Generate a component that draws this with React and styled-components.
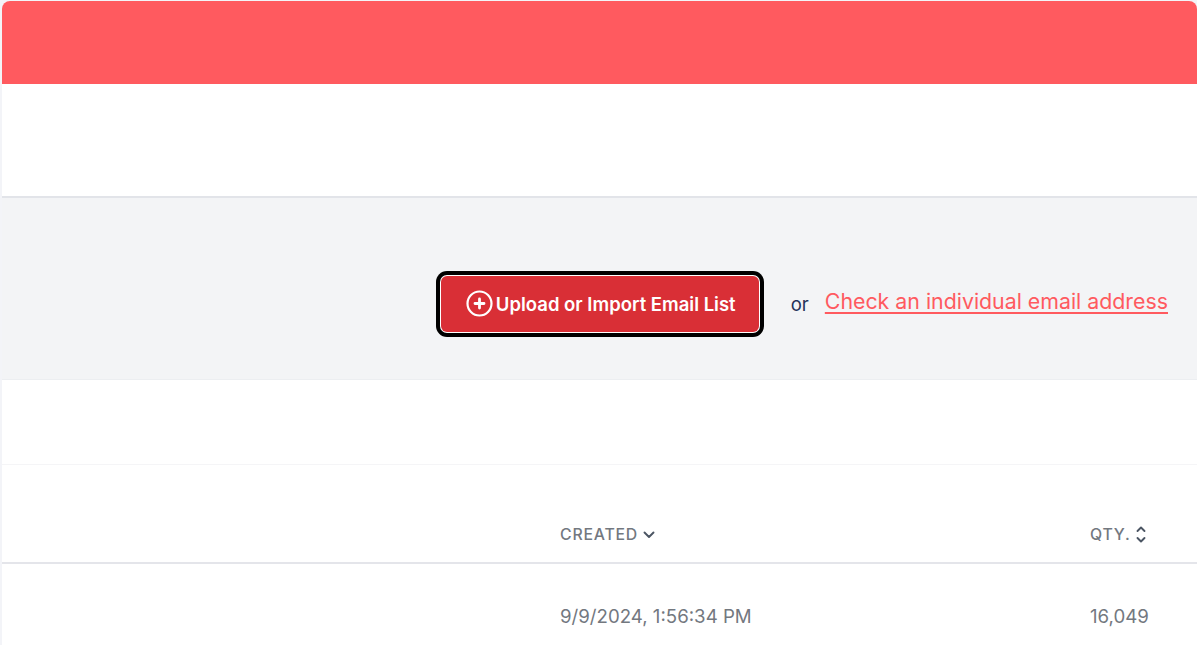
import React from 'react'
import styled, { createGlobalStyle } from 'styled-components'

const GlobalStyle = createGlobalStyle`
  html, body {
    margin: 0;
    padding: 0;
    background: #f3f4f8;
    font-family: Inter, "Liberation Sans", sans-serif;
    overflow: hidden;
  }
`

const Page = styled.div`
  height: 645px;
  padding: 1px 0 0 2px;
  box-sizing: border-box;
  overflow: hidden;
`

const Card = styled.div`
  background: #fff;
  border-radius: 8px 8px 0 0;
  overflow: hidden;
  height: 644px;
`

const Banner = styled.div`
  height: 83px;
  background: #ff5a5f;
`

const Spacer = styled.div`
  height: ${p => p.$height}px;
  border-bottom: ${p => p.$border || 'none'};
`

const ActionBar = styled.div`
  height: 182px;
  box-sizing: border-box;
  background: #f3f4f6;
  border-bottom: 1px solid #eceef1;
  display: flex;
  align-items: center;
  justify-content: flex-end;
  padding: 30px 29px 0 0;
`

const UploadButton = styled.button`
  width: 318px;
  height: 56px;
  margin-right: 32px;
  border: none;
  border-radius: 6px;
  background: #d92f36;
  box-shadow: 0 0 0 1px #fff, 0 0 0 5px #000;
  color: #fff;
  font: 600 18.5px Inter, sans-serif;
  display: flex;
  align-items: center;
  justify-content: center;
  gap: 3px;
  padding: 0 0 0 2px;
`

const Or = styled.span`
  font-size: 18.5px;
  color: #24325a;
  margin-right: 16px;
`

const CheckLink = styled.a`
  font-size: 21.33px;
  color: #ff5a5f;
  text-decoration: underline;
  text-underline-offset: 3px;
  margin-bottom: 6px;
`

const TableRow = styled.div`
  display: grid;
  grid-template-columns: 558px 530px 1fr;
  align-items: center;
  height: ${p => p.$height}px;
  padding-top: ${p => p.$top || 0}px;
  box-sizing: border-box;
  border-bottom: ${p => p.$border || 'none'};
`

const HeadCell = styled.div`
  display: flex;
  align-items: center;
  gap: 5px;
  font-size: 15.8px;
  font-weight: 500;
  letter-spacing: 0.8px;
  color: #73787f;
`

const Cell = styled.div`
  font-size: 18.67px;
  color: #73787f;
`

const PlusCircle = () => (
  <svg width="27" height="27" viewBox="0 0 27 27" fill="none" stroke="#fff" strokeLinecap="round">
    <circle cx="13.5" cy="13.5" r="12" strokeWidth="2.2" />
    <path d="M13.5 9v9M9 13.5h9" strokeWidth="2.8" />
  </svg>
)

const ChevronDown = () => (
  <svg width="12" height="8" viewBox="0 0 12 8" fill="none" stroke="#4b5563" strokeWidth="1.9" strokeLinecap="round" strokeLinejoin="round">
    <path d="M1.5 1.5 6 6l4.5-4.5" />
  </svg>
)

const ChevronUpDown = () => (
  <svg width="10" height="17" viewBox="0 0 10 17" fill="none" stroke="#4b5563" strokeWidth="1.9" strokeLinecap="round" strokeLinejoin="round">
    <path d="M1.5 5 5 1.5 8.5 5M1.5 12 5 15.5 8.5 12" />
  </svg>
)

export default function App() {
  return (
    <>
      <GlobalStyle />
      <Page>
        <Card>
          <Banner />
          <Spacer $height={112} $border="2px solid #e2e4e9" />
          <ActionBar>
            <UploadButton>
              <PlusCircle />
              Upload or Import Email List
            </UploadButton>
            <Or>or</Or>
            <CheckLink href="#">Check an individual email address</CheckLink>
          </ActionBar>
          <Spacer $height={84} $border="1px solid #f5f5f7" />
          <TableRow $height={99} $top={42} $border="2px solid #e4e5ea">
            <div />
            <HeadCell>CREATED <ChevronDown /></HeadCell>
            <HeadCell>QTY. <ChevronUpDown /></HeadCell>
          </TableRow>
          <TableRow $height={104}>
            <div />
            <Cell>9/9/2024, 1:56:34 PM</Cell>
            <Cell>16,049</Cell>
          </TableRow>
        </Card>
      </Page>
    </>
  )
}
